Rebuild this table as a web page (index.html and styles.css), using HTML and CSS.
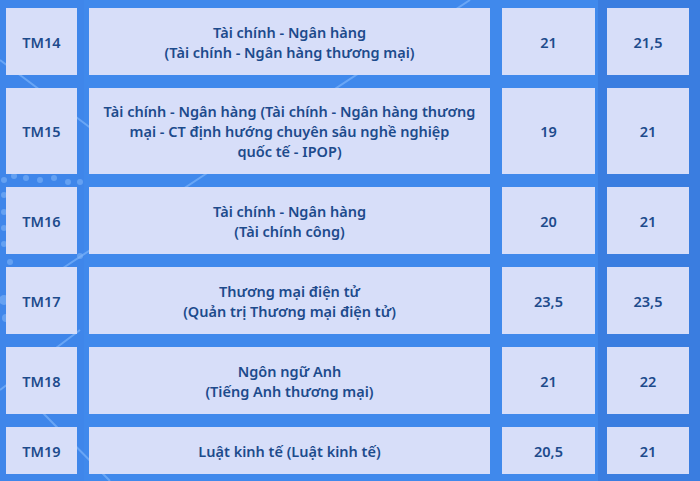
FILE: index.html
```html
<!DOCTYPE html>
<html lang="vi">
<head>
<meta charset="utf-8">
<link rel="stylesheet" href="styles.css">
</head>
<body>
<div class="page">
  <svg class="deco" width="700" height="481" viewBox="0 0 700 481" aria-hidden="true">
    <rect x="598" y="0" width="102" height="481" fill="#3a7de0"/>
    <rect x="0" y="0" width="84" height="481" fill="#3f86ea"/>
    <g stroke="#8cc0ff" stroke-width="2" opacity="0.55" fill="none">
      <line x1="0" y1="60" x2="120" y2="150"/>
      <line x1="60" y1="270" x2="470" y2="0"/>
      <line x1="0" y1="390" x2="80" y2="330"/>
      <line x1="40" y1="410" x2="110" y2="481"/>
    </g>
    <g fill="#7fb4f8" opacity="0.6">
      <circle cx="4" cy="180" r="3"/><circle cx="14" cy="176" r="3"/><circle cx="26" cy="178" r="3"/>
      <circle cx="40" cy="180" r="3"/><circle cx="54" cy="178" r="3"/><circle cx="68" cy="182" r="3"/>
      <circle cx="80" cy="182" r="3"/><circle cx="4" cy="195" r="3"/><circle cx="4" cy="212" r="3"/>
      <circle cx="4" cy="228" r="3"/><circle cx="4" cy="244" r="3"/><circle cx="10" cy="262" r="3"/>
      <circle cx="4" cy="300" r="5"/><circle cx="6" cy="318" r="4"/><circle cx="80" cy="256" r="3"/>
    </g>
  </svg>
  <div class="table">
    <div class="cell code">TM14</div>
    <div class="cell name">Tài chính - Ngân hàng<br>(Tài chính - Ngân hàng thương mại)</div>
    <div class="cell num">21</div>
    <div class="cell num">21,5</div>

    <div class="cell code">TM15</div>
    <div class="cell name">Tài chính - Ngân hàng (Tài chính - Ngân hàng thương<br>mại - CT định hướng chuyên sâu nghề nghiệp<br>quốc tế - IPOP)</div>
    <div class="cell num">19</div>
    <div class="cell num">21</div>

    <div class="cell code">TM16</div>
    <div class="cell name">Tài chính - Ngân hàng<br>(Tài chính công)</div>
    <div class="cell num">20</div>
    <div class="cell num">21</div>

    <div class="cell code">TM17</div>
    <div class="cell name">Thương mại điện tử<br>(Quản trị Thương mại điện tử)</div>
    <div class="cell num">23,5</div>
    <div class="cell num">23,5</div>

    <div class="cell code">TM18</div>
    <div class="cell name">Ngôn ngữ Anh<br>(Tiếng Anh thương mại)</div>
    <div class="cell num">21</div>
    <div class="cell num">22</div>

    <div class="cell code">TM19</div>
    <div class="cell name">Luật kinh tế (Luật kinh tế)</div>
    <div class="cell num">20,5</div>
    <div class="cell num">21</div>
  </div>
</div>
</body>
</html>
```
FILE: styles.css
```css
html, body {
  margin: 0;
  padding: 0;
}
body {
  width: 700px;
  height: 481px;
  overflow: hidden;
  background: #4089ec;
  font-family: "Noto Sans", "Open Sans", sans-serif;
}
.page {
  position: relative;
  width: 700px;
  height: 481px;
  padding: 8px 0 0 6px;
  box-sizing: border-box;
}
.deco {
  position: absolute;
  left: 0;
  top: 0;
}
.table {
  position: relative;
  display: grid;
  grid-template-columns: 71px 401px 93px 82px;
  grid-template-rows: 67px 86px 67px 67px 67px 47px;
  column-gap: 12px;
  row-gap: 13px;
}
.cell {
  background: #d7def9;
  color: #1d4b8c;
  font-weight: 600;
  font-size: 14.5px;
  line-height: 20px;
  display: flex;
  align-items: center;
  justify-content: center;
  text-align: center;
}
.code {
  font-size: 14.5px;
}
```
